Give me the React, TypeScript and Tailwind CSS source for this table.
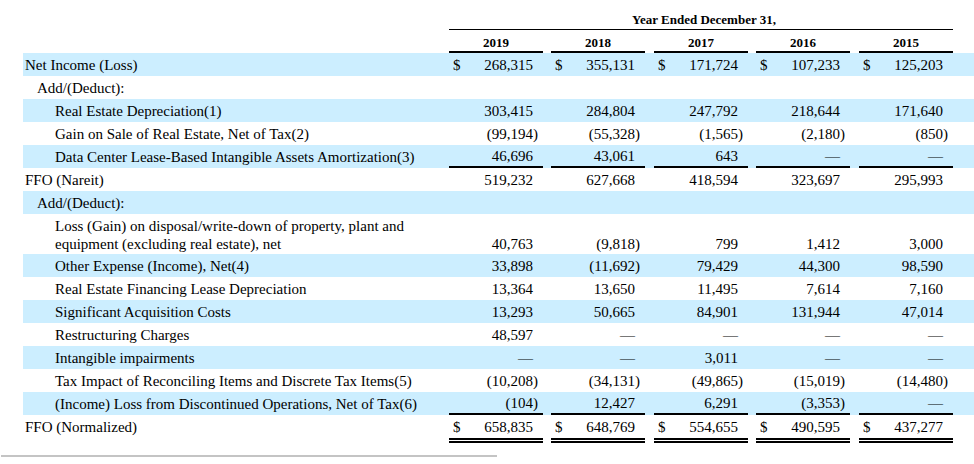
import React from "react";

type Row = {
  label: React.ReactNode;
  indent: 0 | 1 | 2;
  vals?: string[];
  dollar?: boolean;
  blue: boolean;
  border?: "single" | "double";
  tall?: boolean;
};

const rows: Row[] = [
  { label: "Net Income (Loss)", indent: 0, vals: ["268,315", "355,131", "171,724", "107,233", "125,203"], dollar: true, blue: true },
  { label: "Add/(Deduct):", indent: 1, blue: false },
  { label: "Real Estate Depreciation(1)", indent: 2, vals: ["303,415", "284,804", "247,792", "218,644", "171,640"], blue: true },
  { label: "Gain on Sale of Real Estate, Net of Tax(2)", indent: 2, vals: ["(99,194)", "(55,328)", "(1,565)", "(2,180)", "(850)"], blue: false },
  { label: "Data Center Lease-Based Intangible Assets Amortization(3)", indent: 2, vals: ["46,696", "43,061", "643", "—", "—"], blue: true, border: "single" },
  { label: "FFO (Nareit)", indent: 0, vals: ["519,232", "627,668", "418,594", "323,697", "295,993"], blue: false },
  { label: "Add/(Deduct):", indent: 1, blue: true },
  {
    label: (
      <>
        Loss (Gain) on disposal/write-down of property, plant and
        <br />
        equipment (excluding real estate), net
      </>
    ),
    indent: 2,
    vals: ["40,763", "(9,818)", "799", "1,412", "3,000"],
    blue: false,
    tall: true,
  },
  { label: "Other Expense (Income), Net(4)", indent: 2, vals: ["33,898", "(11,692)", "79,429", "44,300", "98,590"], blue: true },
  { label: "Real Estate Financing Lease Depreciation", indent: 2, vals: ["13,364", "13,650", "11,495", "7,614", "7,160"], blue: false },
  { label: "Significant Acquisition Costs", indent: 2, vals: ["13,293", "50,665", "84,901", "131,944", "47,014"], blue: true },
  { label: "Restructuring Charges", indent: 2, vals: ["48,597", "—", "—", "—", "—"], blue: false },
  { label: "Intangible impairments", indent: 2, vals: ["—", "—", "3,011", "—", "—"], blue: true },
  { label: "Tax Impact of Reconciling Items and Discrete Tax Items(5)", indent: 2, vals: ["(10,208)", "(34,131)", "(49,865)", "(15,019)", "(14,480)"], blue: false },
  { label: "(Income) Loss from Discontinued Operations, Net of Tax(6)", indent: 2, vals: ["(104)", "12,427", "6,291", "(3,353)", "—"], blue: true, border: "single" },
  { label: "FFO (Normalized)", indent: 0, vals: ["658,835", "648,769", "554,655", "490,595", "437,277"], dollar: true, blue: false, border: "double" },
];

const years = ["2019", "2018", "2017", "2016", "2015"];

const GRID = "grid grid-cols-[426px_102px_103px_102px_103px_94px]";

function Value({ v, dollar, border, tall }: { v?: string; dollar?: boolean; border?: "single" | "double"; tall?: boolean }) {
  const neg = !!v && v.startsWith("(") && v.endsWith(")");
  const text = neg ? v!.slice(0, -1) : v;
  const borderCls =
    border === "single"
      ? "border-b-2 border-black"
      : border === "double"
      ? "border-b-[5px] border-double border-black"
      : "";
  const h = border === "double" ? "h-[28px]" : tall ? "h-[40px]" : "h-[23px]";
  const align = tall ? "items-end pb-[1px] leading-[18px]" : "items-center leading-[18px]";
  return (
    <div className={`w-[94px] ${h} flex ${align} justify-between pl-[4px] pr-[10px] ${borderCls}`}>
      <span>{dollar ? "$" : ""}</span>
      <span className="relative whitespace-nowrap">
        {text}
        {neg && <span className="absolute left-full top-0">)</span>}
      </span>
    </div>
  );
}

export default function App() {
  return (
    <div className="w-[974px] h-[464px] bg-white text-black font-['Liberation_Serif','Times_New_Roman',serif] text-[15px] overflow-hidden">
      <div className="pl-[23px]">
        {/* Header line 1 */}
        <div className={GRID}>
          <div />
          <div className="col-span-5 h-[30px] border-b border-black flex items-end justify-center pb-[2px] pl-[6px] text-[13px] font-bold leading-[15px]">
            Year Ended December 31,
          </div>
        </div>
        {/* Header line 2 */}
        <div className={GRID}>
          <div />
          {years.map((y) => (
            <div key={y}>
              <div className="w-[94px] h-[23px] border-b-2 border-black flex items-end justify-center pb-[1px] text-[13px] font-bold leading-[15px]">
                {y}
              </div>
            </div>
          ))}
        </div>
        {/* Body */}
        {rows.map((r, i) => (
          <div key={i} className={`${GRID} ${r.blue ? "bg-[#cceeff]" : ""}`}>
            <div
              className={`flex ${r.tall ? "h-[40px] items-start pt-[3px]" : "h-[23px] items-center"} leading-[18px] ${
                r.indent === 0 ? "pl-[2px]" : r.indent === 1 ? "pl-[14px]" : "pl-[32px]"
              }`}
            >
              <span>{r.label}</span>
            </div>
            {years.map((y, j) => (
              <div key={y}>
                {r.vals ? (
                  <Value v={r.vals[j]} dollar={r.dollar} border={r.border} tall={r.tall} />
                ) : (
                  <div className="h-[23px]" />
                )}
              </div>
            ))}
          </div>
        ))}
      </div>
      <div className="mt-[12px] ml-[1px] w-[496px] h-[2px] bg-[#c4c4c4]" />
    </div>
  );
}
